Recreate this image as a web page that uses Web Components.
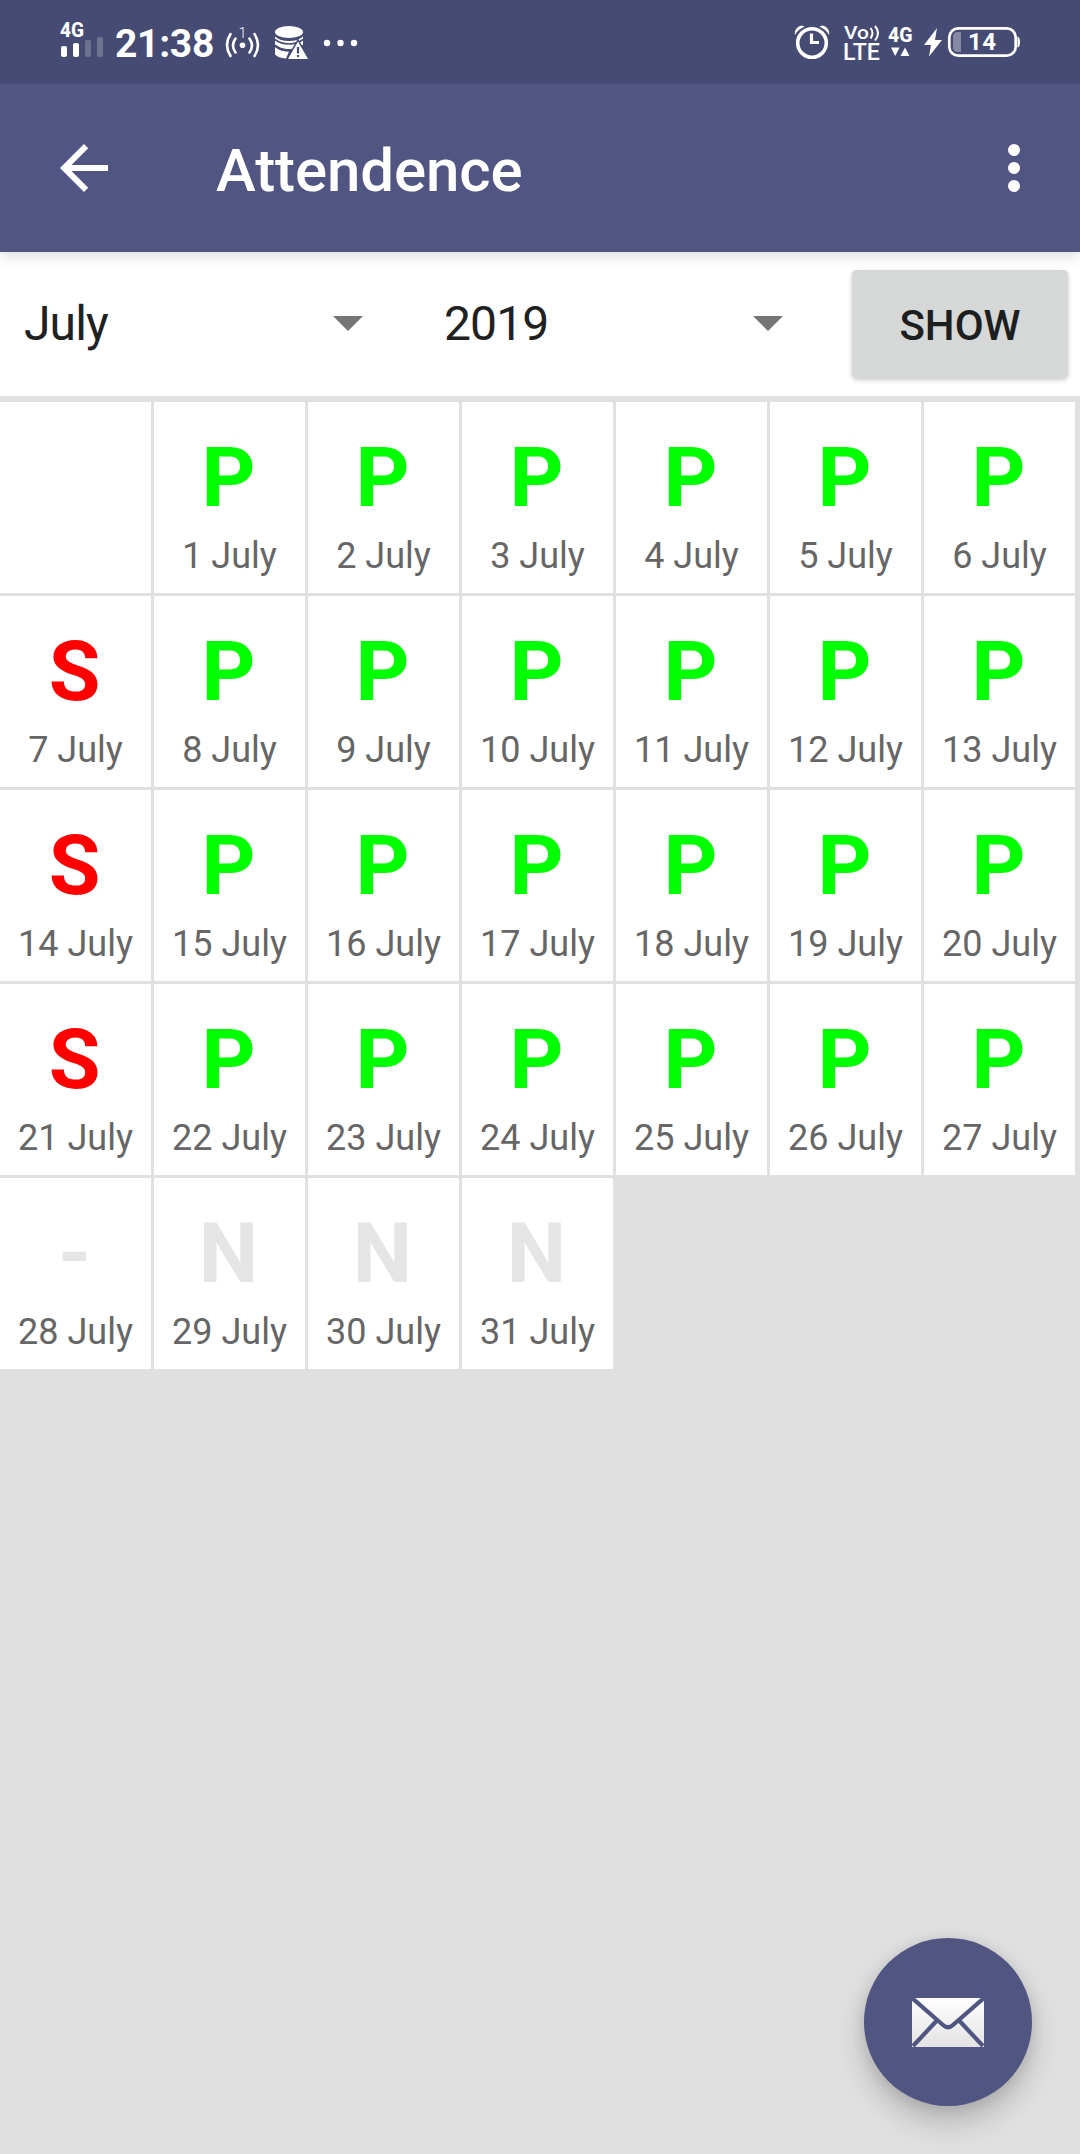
<!DOCTYPE html>
<html lang="en">
<head>
<meta charset="utf-8">
<title>Attendence</title>
<style>
  body {
    margin: 0;
    background: #e0e0e0;
    font-family: Roboto, "Noto Sans", sans-serif;
  }
</style>
</head>
<body>
<attendance-app>
  <status-bar slot="top"></status-bar>
  <app-toolbar slot="top">Attendence</app-toolbar>
  <filter-bar slot="filters">
    <spinner-field>July</spinner-field>
    <spinner-field>2019</spinner-field>
    <raised-button slot="action">SHOW</raised-button>
  </filter-bar>
  <month-grid month="July" offset="1" marks="PPPPPPSPPPPPPSPPPPPPSPPPPPP-NNN"></month-grid>
  <mail-fab slot="fab"></mail-fab>
</attendance-app>

<script>
class AttendanceApp extends HTMLElement {
  constructor() {
    super();
    this.attachShadow({ mode: 'open' });
    this.shadowRoot.innerHTML = `
      <style>
        :host {
          display: flex;
          flex-direction: column;
          position: relative;
          width: 1080px;
          height: 2154px;
          overflow: hidden;
          background: #e0e0e0;
        }
        header {
          position: relative;
          z-index: 1;
          box-shadow: 0 3px 14px rgba(0,0,0,0.16);
        }
        main { margin-top: 6px; }
        .fab {
          position: absolute;
          right: 48px;
          bottom: 48px;
        }
      </style>
      <header><slot name="top"></slot></header>
      <slot name="filters"></slot>
      <main><slot></slot></main>
      <div class="fab"><slot name="fab"></slot></div>
    `;
  }
}

class StatusBar extends HTMLElement {
  constructor() {
    super();
    this.attachShadow({ mode: 'open' });
    this.shadowRoot.innerHTML = `
      <style>
        :host {
          display: flex;
          justify-content: space-between;
          box-sizing: border-box;
          height: 84px;
          padding: 0 56px;
          background: #464b73;
          color: #fff;
        }
        .group { display: flex; }
        svg { display: block; height: 84px; fill: #fff; }
        .time {
          width: 102px;
          margin-left: 9px;
          font-size: 39px;
          line-height: 88px;
          font-weight: 700;
          letter-spacing: -0.3px;
          white-space: nowrap;
        }
      </style>
      <div class="group">
        <!-- signal -->
        <svg width="50" viewBox="56 0 50 84">
          <text x="60" y="37" font-size="21" font-weight="800" textLength="24" lengthAdjust="spacingAndGlyphs">4G</text>
          <rect x="61" y="46" width="6" height="11" rx="2"/>
          <rect x="73" y="43" width="6" height="14" rx="2"/>
          <rect x="85" y="40" width="6" height="17" rx="2" opacity=".22"/>
          <rect x="97" y="37" width="6" height="20" rx="2" opacity=".22"/>
        </svg>
        <div class="time">21:38</div>
        <!-- hotspot -->
        <svg width="46" viewBox="217 0 46 84">
          <text x="238.500" y="38" font-size="14.500" font-weight="300">1</text>
          <circle cx="242.500" cy="45.200" r="2.800"/>
          <g fill="none" stroke="#fff" stroke-width="2.600" stroke-linecap="round">
            <path d="M235.500 38.500Q230.500 45.500 235.500 52.500M249.500 38.500Q254.500 45.500 249.500 52.500"/>
            <path d="M230.500 34Q223.500 45 230.500 56M254.500 34Q261.500 45 254.500 56"/>
          </g>
        </svg>
        <!-- storage warning -->
        <svg width="46" viewBox="263 0 46 84">
          <ellipse cx="289" cy="32" rx="14" ry="6"/>
          <path d="M275 36.500Q280 41 289 41T303 36.500V44.500Q298 49 289 49T275 44.500Z"/>
          <path d="M275 47Q280 51.500 289 51.500L286 58.500Q278 58 275 54.500Z"/>
          <path d="M275 45.500Q281 50.500 290 50.500" fill="none" stroke="#464b73" stroke-width="2"/>
          <path d="M275 39.500Q281 44 289 44T303 39.500" fill="none" stroke="#464b73" stroke-width="1.600"/>
          <path d="M298 41.500L308 59H288Z" stroke="#464b73" stroke-width="3" paint-order="stroke"/>
          <path d="M298 47V53.500M298 55V57" stroke="#464b73" stroke-width="2.200"/>
        </svg>
        <!-- more notifications -->
        <svg width="50" viewBox="309 0 50 84">
          <circle cx="327" cy="43" r="3.200"/>
          <circle cx="340.500" cy="43" r="3.200"/>
          <circle cx="354" cy="43" r="3.200"/>
        </svg>
      </div>
      <div class="group">
        <!-- alarm -->
        <svg width="44" viewBox="792 0 44 84">
          <g fill="none" stroke="#fff">
            <circle cx="812" cy="43" r="14.300" stroke-width="3.600"/>
            <path d="M811.500 33.500V42.500H819" stroke-width="3.200"/>
          </g>
          <path d="M795 35Q794 30 798 27Q802 24 804.500 27Q798 29 795 35ZM829 35Q830 30 826 27Q822 24 819.500 27Q826 29 829 35Z"/>
        </svg>
        <!-- volte -->
        <svg width="48" viewBox="836 0 48 84">
          <text font-weight="500"><tspan x="844" y="38.500" font-size="18.500" textLength="25" lengthAdjust="spacingAndGlyphs">Vo</tspan><tspan x="843" y="60" font-size="23" textLength="37" lengthAdjust="spacingAndGlyphs">LTE</tspan></text>
          <path d="M870.500 28Q874.500 33 870.500 38.500M875 26Q881 33 875 40.500" fill="none" stroke="#fff" stroke-width="2"/>
        </svg>
        <!-- data -->
        <svg width="34" viewBox="884 0 34 84">
          <text x="888" y="42" font-size="21" font-weight="800" textLength="24.500" lengthAdjust="spacingAndGlyphs">4G</text>
          <path d="M891 47.500H899.500L895.200 56ZM900.500 56H909.500L905 47.500Z"/>
        </svg>
        <!-- battery -->
        <svg width="106" viewBox="918 0 106 84">
          <path d="M937 28L924 45H931L929 56.500L942 40H935Z"/>
          <rect x="949.300" y="28.300" width="66.400" height="27.400" rx="9" fill="none" stroke="#fff" stroke-width="2.700"/>
          <path d="M961 32V52H958Q953 52 953 47V37Q953 32 958 32Z" opacity=".35"/>
          <path d="M1017.500 36.500Q1020 37 1020 42T1017.500 47.500Z"/>
          <text x="968" y="50" font-size="24" font-weight="700" textLength="28">14</text>
        </svg>
      </div>
    `;
  }
}

class AppToolbar extends HTMLElement {
  constructor() {
    super();
    this.attachShadow({ mode: 'open' });
    this.shadowRoot.innerHTML = `
      <style>
        :host {
          display: flex;
          align-items: center;
          box-sizing: border-box;
          height: 168px;
          padding: 0 30px 0 48px;
          background: #505581;
          color: #fff;
        }
        svg { width: 72px; height: 72px; fill: #fff; }
        h1 {
          flex: 1;
          margin: 6px 0 0 96px;
          font-size: 60px;
          line-height: 70px;
          font-weight: 500;
          letter-spacing: -0.1px;
        }
      </style>
      <svg viewBox="0 0 24 24"><path d="M20 11H7.830l5.590-5.590L12 4l-8 8 8 8 1.410-1.410L7.830 13H20v-2z"/></svg>
      <h1><slot></slot></h1>
      <svg viewBox="0 0 24 24"><circle cx="12" cy="6" r="2"/><circle cx="12" cy="12" r="2"/><circle cx="12" cy="18" r="2"/></svg>
    `;
  }
}

class FilterBar extends HTMLElement {
  constructor() {
    super();
    this.attachShadow({ mode: 'open' });
    this.shadowRoot.innerHTML = `
      <style>
        :host {
          display: grid;
          grid-template-columns: 840px 1fr;
          align-items: center;
          height: 144px;
          background: #fff;
        }
        .fields { display: grid; grid-template-columns: 1fr 1fr; }
        .action { padding: 0 12px; }
      </style>
      <div class="fields"><slot></slot></div>
      <div class="action"><slot name="action"></slot></div>
    `;
  }
}

class SpinnerField extends HTMLElement {
  constructor() {
    super();
    this.attachShadow({ mode: 'open' });
    this.shadowRoot.innerHTML = `
      <style>
        :host {
          display: flex;
          align-items: center;
          justify-content: space-between;
          padding: 0 57px 0 24px;
          color: #212121;
          font-size: 48px;
          line-height: 56px;
          letter-spacing: -0.9px;
        }
        .arrow {
          margin-bottom: 1px;
          border: 15px solid transparent;
          border-top-color: #757575;
          border-bottom: 0;
        }
      </style>
      <span><slot></slot></span>
      <span class="arrow"></span>
    `;
  }
}

class RaisedButton extends HTMLElement {
  constructor() {
    super();
    this.attachShadow({ mode: 'open' });
    this.shadowRoot.innerHTML = `
      <style>
        :host { display: block; }
        button {
          display: block;
          width: 100%;
          height: 108px;
          padding: 3px 0 0;
          border: 0;
          border-radius: 5px;
          background: #d6d8d7;
          box-shadow: 0 2px 5px rgba(0,0,0,0.22);
          color: #1d1f1e;
          font: 500 42px Roboto, sans-serif;
        }
      </style>
      <button><slot></slot></button>
    `;
  }
}

class DayCell extends HTMLElement {
  constructor() {
    super();
    this.attachShadow({ mode: 'open' });
    this.shadowRoot.innerHTML = `
      <style>
        :host {
          display: flex;
          flex-direction: column;
          align-items: center;
          box-sizing: border-box;
          padding-top: 27px;
          background: #fff;
          color: #666;
          font-size: 36px;
          line-height: 42px;
          white-space: nowrap;
        }
        .mark {
          margin-right: 2px;
          font-size: 84px;
          line-height: 98px;
          font-weight: 700;
          color: #e5e5e5;
        }
        :host([mark="P"]) .mark { color: #0f0; }
        :host([mark="S"]) .mark { color: #f00; }
        .date { margin-top: 8px; }
      </style>
      <div class="mark">${this.getAttribute('mark') || ''}</div>
      <div class="date"><slot></slot></div>
    `;
  }
}

class MonthGrid extends HTMLElement {
  constructor() {
    super();
    this.attachShadow({ mode: 'open' });
    const month = this.getAttribute('month');
    const blanks = '<day-cell></day-cell>'.repeat(Number(this.getAttribute('offset')));
    const days = [...this.getAttribute('marks')]
      .map((mark, i) => `<day-cell mark="${mark}">${i + 1} ${month}</day-cell>`)
      .join('');
    this.shadowRoot.innerHTML = `
      <style>
        :host {
          display: grid;
          grid-template-columns: repeat(7, 151px);
          grid-auto-rows: 191px;
          gap: 3px;
        }
      </style>
      ${blanks}${days}
    `;
  }
}

class MailFab extends HTMLElement {
  constructor() {
    super();
    this.attachShadow({ mode: 'open' });
    this.shadowRoot.innerHTML = `
      <style>
        :host {
          display: grid;
          place-items: center;
          width: 168px;
          height: 168px;
          border-radius: 50%;
          background: #505581;
          box-shadow: 0 16px 30px rgba(0,0,0,0.2), 0 2px 14px rgba(0,0,0,0.1);
        }
        svg { width: 72px; height: 49px; }
      </style>
      <svg viewBox="0 0 72 49">
        <defs>
          <linearGradient id="paper" x1="0" y1="0" x2="0" y2="49" gradientUnits="userSpaceOnUse">
            <stop offset="0" stop-color="#fff"/>
            <stop offset="1" stop-color="#e2e2e2"/>
          </linearGradient>
        </defs>
        <rect width="72" height="49" fill="url(#paper)"/>
        <path d="M0 0L31 27Q36 31.500 41 27L72 0M1 48L24 23.500M71 48L48 23.500" fill="none" stroke="#505581" stroke-width="4.200"/>
      </svg>
    `;
  }
}

customElements.define('attendance-app', AttendanceApp);
customElements.define('status-bar', StatusBar);
customElements.define('app-toolbar', AppToolbar);
customElements.define('filter-bar', FilterBar);
customElements.define('spinner-field', SpinnerField);
customElements.define('raised-button', RaisedButton);
customElements.define('month-grid', MonthGrid);
customElements.define('day-cell', DayCell);
customElements.define('mail-fab', MailFab);
</script>
</body>
</html>
